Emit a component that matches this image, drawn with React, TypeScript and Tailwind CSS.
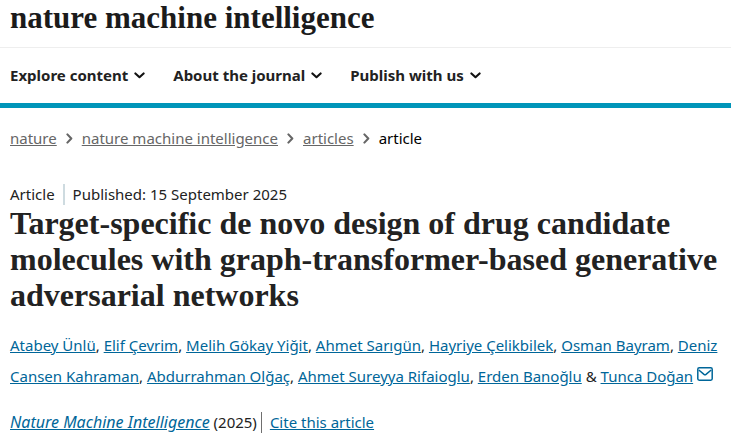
import React from 'react'

interface Author {
  name: string
  corresponding?: boolean
}

const menuItems = ['Explore content', 'About the journal', 'Publish with us']

const crumbs = ['nature', 'nature machine intelligence', 'articles']

const authors: Author[] = [
  { name: 'Atabey Ünlü' },
  { name: 'Elif Çevrim' },
  { name: 'Melih Gökay Yiğit' },
  { name: 'Ahmet Sarıgün' },
  { name: 'Hayriye Çelikbilek' },
  { name: 'Osman Bayram' },
  { name: 'Deniz Cansen Kahraman' },
  { name: 'Abdurrahman Olğaç' },
  { name: 'Ahmet Sureyya Rifaioglu' },
  { name: 'Erden Banoğlu' },
  { name: 'Tunca Doğan', corresponding: true },
]

function ChevronDown() {
  return (
    <svg className="h-[7px] w-[11px]" viewBox="0 0 11 7" fill="none" aria-hidden="true">
      <path d="M1.4 1.4 5.5 5.2 9.6 1.4" stroke="#111" strokeWidth="2.1" strokeLinecap="round" strokeLinejoin="round" />
    </svg>
  )
}

function ChevronRight() {
  return (
    <svg className="h-[11px] w-[7px]" viewBox="0 0 7 11" fill="none" aria-hidden="true">
      <path d="M1.4 1.4 5.3 5.5 1.4 9.6" stroke="#666" strokeWidth="2.1" strokeLinecap="round" strokeLinejoin="round" />
    </svg>
  )
}

function MailIcon() {
  return (
    <svg className="ml-1 inline-block h-[14px] w-4 align-[1px]" viewBox="0 0 16 14" fill="none" aria-label="Email">
      <rect x="0.8" y="0.8" width="14.4" height="12.4" rx="1.4" stroke="#069" strokeWidth="1.5" />
      <path d="M1.8 3 7 7.4Q8 8.2 9 7.4L14.2 3" stroke="#069" strokeWidth="1.5" />
    </svg>
  )
}

export default function App() {
  return (
    <div className="min-h-screen bg-white font-['Noto_Sans','Open_Sans',sans-serif] text-[15px] text-[#222]">
      <header className="border-b-[5px] border-[#0095b9]">
        <div className="border-b border-[#eee] px-[10px] pb-[11px]">
          <a
            href="#home"
            className="block font-['Liberation_Serif',serif] text-[31px] leading-9 font-bold text-[#1b1b1b]"
          >
            nature machine intelligence
          </a>
        </div>
        <nav aria-label="Main" className="flex gap-7 px-[10px] py-4">
          {menuItems.map((item) => (
            <button key={item} type="button" className="flex items-center gap-[6px] leading-[23px] font-bold">
              {item}
              <ChevronDown />
            </button>
          ))}
        </nav>
      </header>

      <main className="px-[10px]">
        <nav aria-label="Breadcrumb" className="pt-[18px]">
          <ol className="flex flex-wrap items-center gap-[9px] leading-6">
            {crumbs.map((crumb) => (
              <li key={crumb} className="flex items-center gap-[9px]">
                <a href="#crumb" className="text-[#666] underline">
                  {crumb}
                </a>
                <ChevronRight />
              </li>
            ))}
            <li className="text-black">article</li>
          </ol>
        </nav>

        <article className="pt-[34px]">
          <ul className="flex leading-[21px]">
            <li className="mr-2 border-r-2 border-[#cedbe0] pr-2">Article</li>
            <li>
              Published: <time dateTime="2025-09-15">15 September 2025</time>
            </li>
          </ul>

          <h1 className="font-['Liberation_Serif',serif] text-[32px] leading-9 font-bold">
            Target-specific de novo design of drug candidate molecules with graph-transformer-based generative
            adversarial networks
          </h1>

          {/* Author list */}
          <ul className="pt-[17px] leading-[31px]">
            {authors.map((author, index) => (
              <li key={author.name} className="inline">
                {index > 0 && <span>{index === authors.length - 1 ? ' & ' : ', '}</span>}
                <a href="#author" className="text-[#069] underline">
                  {author.name}
                  {author.corresponding && <MailIcon />}
                </a>
              </li>
            ))}
          </ul>

          <div className="flex pt-5 leading-[21px]">
            <p className="mr-2 border-r border-[#6f6f6f] pr-1">
              <a href="#journal" className="text-base leading-[21px] text-[#069] italic underline">
                Nature Machine Intelligence
              </a>{' '}
              <span>(2025)</span>
            </p>
            <a href="#cite" className="text-[#069] underline">
              Cite this article
            </a>
          </div>
        </article>
      </main>
    </div>
  )
}
